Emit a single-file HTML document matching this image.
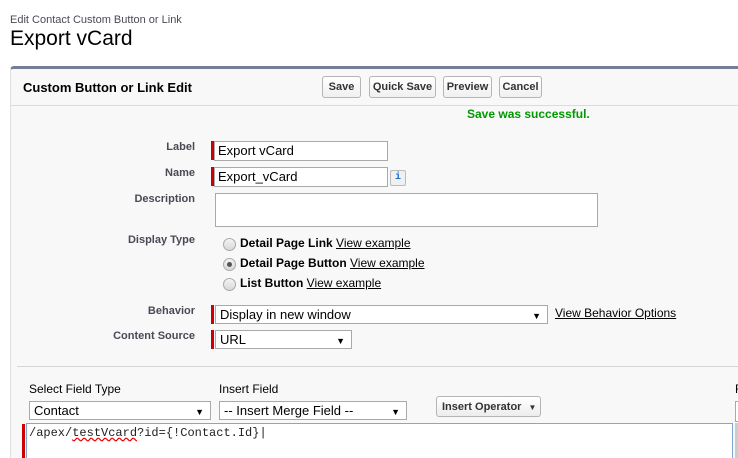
<!DOCTYPE html>
<html style="overflow:hidden"><head><style>
html,body{overflow:hidden}
body{margin:0;width:738px;height:458px;overflow:hidden;background:#fff;font-family:"Liberation Sans",Arial,sans-serif;position:relative}
.a{position:absolute;white-space:nowrap}
.lbl{position:absolute;right:543px;font-size:11px;font-weight:bold;color:#4a4a56;text-align:right}
.btn{position:absolute;top:76px;height:20px;border:1px solid #b5b5b5;border-radius:3px;background:linear-gradient(#fff,#f0f0f0);font-size:11px;font-weight:bold;color:#333;text-align:center;line-height:20px;box-sizing:content-box}
.inp{position:absolute;border:1px solid #a9a9a9;background:#fff;font-size:13px;color:#000;box-sizing:border-box;padding-left:3px}
.req{position:absolute;width:3px;background:#c00}
.sel{position:absolute;border:1px solid #a9a9a9;background:#fff;font-size:13px;box-sizing:border-box;padding-left:4px}
.sel:after{content:"▼";position:absolute;right:6px;top:2px;font-size:9px}
.radio{position:absolute;left:223px;width:11px;height:11px;border:1px solid #aaa;border-radius:50%;background:linear-gradient(#f4f4f4,#d8d8d8)}
.rt{position:absolute;left:240px;font-size:12px;font-weight:bold;color:#000}
.rt u{font-weight:normal}
</style></head><body>
<div class="a" style="left:10px;top:14px;font-size:11px;color:#4a4a56">Edit Contact Custom Button or Link</div>
<div class="a" style="left:10px;top:27px;font-size:21px;color:#000">Export vCard</div>
<div class="a" style="left:10px;top:66px;width:728px;height:389px;background:#f8f8f8;border-top:3px solid #747e96;border-left:1px solid #e0e0e0;border-radius:4px 0 0 0"></div>
<div class="a" style="left:11px;top:105px;width:727px;height:1px;background:#dbdbdb"></div>
<div class="a" style="left:23px;top:80px;font-size:13px;font-weight:bold;color:#000">Custom Button or Link Edit</div>
<div class="btn" style="left:322px;width:37px">Save</div>
<div class="btn" style="left:369px;width:65px">Quick Save</div>
<div class="btn" style="left:443px;width:47px">Preview</div>
<div class="btn" style="left:499px;width:41px">Cancel</div>
<div class="a" style="left:467px;top:107px;font-size:12px;font-weight:bold;color:#090">Save was successful.</div>

<div class="lbl" style="top:141px">Label</div>
<div class="lbl" style="top:167px">Name</div>
<div class="lbl" style="top:193px">Description</div>
<div class="lbl" style="top:234px">Display Type</div>
<div class="lbl" style="top:305px">Behavior</div>
<div class="lbl" style="top:330px">Content Source</div>

<div class="req" style="left:211px;top:141px;height:19px"></div>
<div class="inp" style="left:214px;top:141px;width:174px;height:20px;line-height:18px">Export vCard</div>
<div class="req" style="left:211px;top:167px;height:19px"></div>
<div class="inp" style="left:214px;top:167px;width:174px;height:20px;line-height:18px">Export_vCard</div>
<div class="a" style="left:390px;top:170px;width:14px;height:14px;border:1px solid #bbb;border-radius:2px;background:#f0f0f0;color:#1a6fc9;font-size:10px;font-weight:bold;text-align:center;line-height:14px;font-family:'Liberation Mono',monospace">i</div>
<div class="inp" style="left:215px;top:193px;width:383px;height:34px"></div>

<div class="radio" style="top:238px"></div>
<div class="rt" style="top:236px">Detail Page Link <u>View example</u></div>
<div class="radio" style="top:258px"><div style="position:absolute;left:3px;top:3px;width:5px;height:5px;border-radius:50%;background:#555"></div></div>
<div class="rt" style="top:256px">Detail Page Button <u>View example</u></div>
<div class="radio" style="top:278px"></div>
<div class="rt" style="top:276px">List Button <u>View example</u></div>

<div class="req" style="left:211px;top:305px;height:19px"></div>
<div class="sel" style="left:215px;top:305px;width:333px;height:19px;line-height:17px">Display in new window</div>
<div class="a" style="left:555px;top:306px;font-size:12px;text-decoration:underline;color:#000">View Behavior Options</div>
<div class="req" style="left:211px;top:330px;height:19px"></div>
<div class="sel" style="left:215px;top:330px;width:137px;height:19px;line-height:17px">URL</div>

<div class="a" style="left:17px;top:366px;width:721px;height:1px;background:#d4d4d4"></div>
<div class="a" style="left:29px;top:382px;font-size:12px;color:#000">Select Field Type</div>
<div class="a" style="left:219px;top:382px;font-size:12px;color:#000">Insert Field</div>
<div class="a" style="left:735px;top:382px;font-size:12px;color:#000">F</div>
<div class="sel" style="left:29px;top:401px;width:182px;height:19px;line-height:17px">Contact</div>
<div class="sel" style="left:219px;top:401px;width:188px;height:19px;line-height:17px">-- Insert Merge Field --</div>
<div class="a" style="left:436px;top:396px;width:105px;height:21px;border:1px solid #b5b5b5;border-radius:3px;background:linear-gradient(#fff,#ededed);font-size:11px;font-weight:bold;color:#333;line-height:21px;padding-left:5px;box-sizing:border-box">Insert Operator <span style="font-size:8px;margin-left:4px">▼</span></div>
<div class="a" style="left:735px;top:401px;width:3px;height:19px;border:1px solid #a9a9a9;border-right:none;background:#fff"></div>

<div class="req" style="left:22px;top:424px;height:34px"></div>
<div class="a" style="left:26px;top:423px;width:707px;height:35px;border:1px solid #7fa7d8;border-bottom:none;background:#fff;box-sizing:border-box"></div>
<div class="a" style="left:29px;top:426px;font-family:'Liberation Mono',monospace;font-size:12px;color:#222">/apex/<span style="text-decoration:underline wavy #e00">testVcard</span>?id={!Contact.Id}|</div>
<div class="a" style="left:735px;top:423px;width:3px;height:35px;background:#ccc"></div>
</body></html>
